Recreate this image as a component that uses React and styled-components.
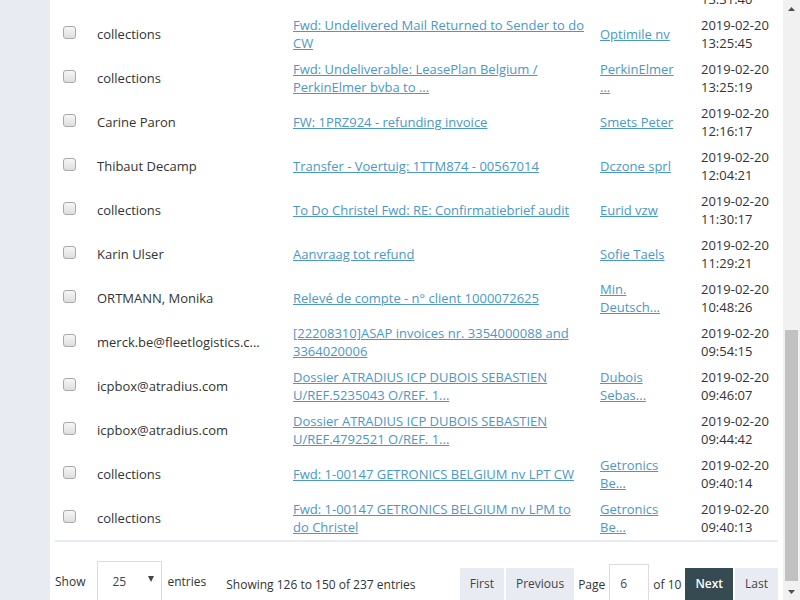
import React from "react";
import styled, { createGlobalStyle } from "styled-components";

const GlobalStyle = createGlobalStyle`
    html, body {
        margin: 0;
        padding: 0;
        overflow: hidden;
    }
    body {
        font-family: "Open Sans", "Liberation Sans", sans-serif;
        font-size: 13px;
        color: #333;
    }
`;

const rows = [
    { name: "", subject: "Fwd: Declaration de naissance (05/10/1983)", company: "", date: "2019-02-20 13:31:40", partial: true },
    { name: "collections", subject: "Fwd: Undelivered Mail Returned to Sender to do CW", company: "Optimile nv", date: "2019-02-20 13:25:45" },
    { name: "collections", subject: "Fwd: Undeliverable: LeasePlan Belgium / PerkinElmer bvba to ...", company: "PerkinElmer ...", date: "2019-02-20 13:25:19" },
    { name: "Carine Paron", subject: "FW: 1PRZ924 - refunding invoice", company: "Smets Peter", date: "2019-02-20 12:16:17" },
    { name: "Thibaut Decamp", subject: "Transfer - Voertuig: 1TTM874 - 00567014", company: "Dczone sprl", date: "2019-02-20 12:04:21" },
    { name: "collections", subject: "To Do Christel Fwd: RE: Confirmatiebrief audit", company: "Eurid vzw", date: "2019-02-20 11:30:17" },
    { name: "Karin Ulser", subject: "Aanvraag tot refund", company: "Sofie Taels", date: "2019-02-20 11:29:21" },
    { name: "ORTMANN, Monika", subject: "Relevé de compte - n° client 1000072625", company: "Min. Deutsch...", date: "2019-02-20 10:48:26" },
    { name: "merck.be@fleetlogistics.c...", subject: "[22208310]ASAP invoices nr. 3354000088 and 3364020006", company: "", date: "2019-02-20 09:54:15" },
    { name: "icpbox@atradius.com", subject: "Dossier ATRADIUS ICP DUBOIS SEBASTIEN U/REF.5235043 O/REF. 1...", company: "Dubois Sebas...", date: "2019-02-20 09:46:07" },
    { name: "icpbox@atradius.com", subject: "Dossier ATRADIUS ICP DUBOIS SEBASTIEN U/REF.4792521 O/REF. 1...", company: "", date: "2019-02-20 09:44:42" },
    { name: "collections", subject: "Fwd: 1-00147 GETRONICS BELGIUM nv LPT CW", company: "Getronics Be...", date: "2019-02-20 09:40:14" },
    { name: "collections", subject: "Fwd: 1-00147 GETRONICS BELGIUM nv LPM to do Christel", company: "Getronics Be...", date: "2019-02-20 09:40:13" },
];

export default function App(){
    return(
        <>
            <GlobalStyle />
            <Screen>
                <Page>
                    <Panel>
                        <Scrolled>
                            <Table>
                                <colgroup>
                                    <col style={{ width: 34 }} />
                                    <col style={{ width: 196 }} />
                                    <col style={{ width: 307 }} />
                                    <col style={{ width: 101 }} />
                                    <col style={{ width: 85 }} />
                                </colgroup>
                                <tbody>
                                    {rows.map((r, i) => (
                                        <Row key={i}>
                                            <Cell>{!r.partial && <Check type="checkbox" />}</Cell>
                                            <Cell>{r.name}</Cell>
                                            <Cell><Link href="#">{r.subject}</Link></Cell>
                                            <Cell>{r.company && <Link href="#">{r.company}</Link>}</Cell>
                                            <Cell>{r.date}</Cell>
                                        </Row>
                                    ))}
                                </tbody>
                            </Table>
                        </Scrolled>

                        <Footer>
                            <Length>
                                Show
                                <Select>
                                    <span>25</span>
                                    <Caret />
                                </Select>
                                entries
                            </Length>
                            <Info>Showing 126 to 150 of 237 entries</Info>
                            <Pager>
                                <PageButton>First</PageButton>
                                <PageButton>Previous</PageButton>
                                <PageLabel>Page</PageLabel>
                                <PageInput>6</PageInput>
                                <PageLabel>of 10</PageLabel>
                                <PageButton $active>Next</PageButton>
                                <PageButton>Last</PageButton>
                            </Pager>
                        </Footer>
                    </Panel>
                </Page>

                <Scrollbar>
                    <Arrow>
                        <svg width="7" height="4" viewBox="0 0 7 4"><path d="M0 4 L3.5 0 L7 4 Z" fill="#505050" /></svg>
                    </Arrow>
                    <Track>
                        <Thumb />
                    </Track>
                    <Arrow>
                        <svg width="7" height="4" viewBox="0 0 7 4"><path d="M0 0 L3.5 4 L7 0 Z" fill="#505050" /></svg>
                    </Arrow>
                </Scrollbar>
            </Screen>
        </>
    );
}

const Screen = styled.div`
    display: flex;
    width: 800px;
    height: 600px;
    overflow: hidden;
`;

const Page = styled.div`
    flex: 1;
    background: #e8ebf2;
    padding-left: 50px;
    display: flex;
    overflow: hidden;
`;

const Panel = styled.div`
    flex: 1;
    background: white;
    padding: 0 5px;
    display: flex;
    flex-direction: column;
`;

const Scrolled = styled.div`
    margin-top: -32px;
`;

const Table = styled.table`
    width: 723px;
    table-layout: fixed;
    border-collapse: collapse;
    border-bottom: 2px solid #e8ebf2;
`;

const Row = styled.tr`
    height: 44px;
`;

const Cell = styled.td`
    padding: 4px 8px;
    line-height: 18px;
    vertical-align: middle;
    color: #333;
    word-wrap: break-word;
`;

const Link = styled.a`
    color: #4a97c9;
    text-decoration: underline;
`;

const Check = styled.input`
    appearance: none;
    display: block;
    width: 13px;
    height: 13px;
    margin: -3px 0 0 0;
    border: 1px solid #a9a9a9;
    border-radius: 3px;
    background: linear-gradient(#f6f6f6, #dedede);
    box-sizing: border-box;
`;

const Footer = styled.div`
    display: flex;
    align-items: flex-start;
    padding-top: 19px;
    font-size: 12px;
`;

const Length = styled.div`
    display: flex;
    align-items: center;
    height: 40px;
    color: #333;
`;

const Select = styled.div`
    width: 65px;
    height: 40px;
    box-sizing: border-box;
    margin: 0 5px 0 12px;
    border: 1px solid #dcdcdc;
    display: flex;
    align-items: center;
    justify-content: space-between;
    padding: 0 7px 0 14px;
    color: #444;
`;

const Caret = styled.span`
    width: 0;
    height: 0;
    margin-top: -5px;
    border-left: 3.5px solid transparent;
    border-right: 3.5px solid transparent;
    border-top: 6px solid #444;
`;

const Info = styled.div`
    margin-left: 20px;
    padding-top: 15px;
    line-height: 18px;
    color: #333;
`;

const Pager = styled.div`
    margin-left: auto;
    margin-top: 3px;
    display: flex;
    align-items: center;
    gap: 2px;
`;

const PageButton = styled.div`
    height: 32px;
    line-height: 32px;
    padding: 0 10px;
    background: ${p => p.$active ? "#364a52" : "#e8ebf2"};
    color: ${p => p.$active ? "white" : "#444"};
    font-weight: ${p => p.$active ? 600 : 400};
`;

const PageLabel = styled.span`
    padding: 0 2px;
    color: #333;
`;

const PageInput = styled.div`
    width: 40px;
    height: 40px;
    box-sizing: border-box;
    border: 1px solid #dcdcdc;
    padding-left: 10px;
    line-height: 38px;
    color: #444;
`;

const Scrollbar = styled.div`
    width: 17px;
    background: #f1f1f1;
    display: flex;
    flex-direction: column;
`;

const Arrow = styled.div`
    height: 17px;
    display: flex;
    align-items: center;
    justify-content: center;
`;

const Track = styled.div`
    flex: 1;
    display: flex;
    flex-direction: column;
    justify-content: flex-end;
    padding: 0 2px 0 2px;
`;

const Thumb = styled.div`
    height: 251px;
    margin-bottom: 2px;
    background: #c1c1c1;
`;
